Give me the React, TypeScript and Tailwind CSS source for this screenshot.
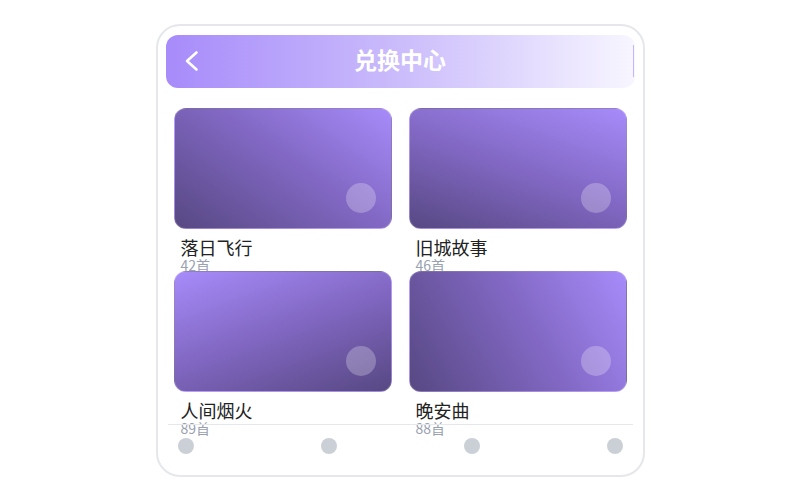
import React from 'react';

type Album = {
  title: string;
  count: number;
  gradient: string;
};

const albums: Album[] = [
  { title: '落日飞行', count: 42, gradient: 'bg-[linear-gradient(215deg,#a78bfa_0%,#8268c4_45%,#574883_100%)]' },
  { title: '旧城故事', count: 46, gradient: 'bg-[linear-gradient(200deg,#a78bfa_0%,#8268c4_50%,#574883_100%)]' },
  { title: '人间烟火', count: 89, gradient: 'bg-[linear-gradient(160deg,#a78bfa_0%,#8066c0_50%,#574883_100%)]' },
  { title: '晚安曲', count: 88, gradient: 'bg-[linear-gradient(240deg,#a78bfa_0%,#8268c4_45%,#574883_100%)]' },
];

const font = { fontFamily: '"Noto Sans CJK SC", "Noto Sans", sans-serif' };

const AlbumCard: React.FC<{ album: Album }> = ({ album }) => (
  <div className="h-[163px]">
    <div className={`relative h-[121px] rounded-[12px] border border-white/20 ${album.gradient}`}>
      <div className="absolute right-[15px] bottom-[15px] w-[30px] h-[30px] rounded-full bg-white/25" />
    </div>
    <div className="mt-2 pl-[7px] text-[18px] leading-[21px] text-[#222]">{album.title}</div>
    <div className="pl-[7px] text-[14px] leading-[14px] text-gray-400">{album.count}首</div>
  </div>
);

export default function App() {
  return (
    <div className="w-[800px] h-[500px] flex items-center justify-center bg-white" style={font}>
      <div className="w-[489px] h-[453px] border-2 border-gray-200 rounded-[24px] bg-white flex flex-col pt-[9px] px-2">
        {/* header */}
        <div className="relative h-[53px] rounded-[12px] bg-gradient-to-r from-[#a78bfa] via-[#cbbcfb] to-[#f8f6ff] flex items-center justify-center pb-[4px]">
          <svg className="absolute left-[18px] top-[15px]" width="16" height="22" viewBox="0 0 16 22" fill="none">
            <polyline points="12.5,2.5 3,11 12.5,19.5" stroke="white" strokeWidth="2.6" strokeLinecap="round" strokeLinejoin="round" />
          </svg>
          <span className="text-white font-bold text-[23px] leading-none">兑换中心</span>
          <div className="absolute right-[1px] top-[10px] bottom-[11px] w-px bg-[#c4b5fd]" />
        </div>

        {/* list */}
        <div className="h-[336px] pt-5 px-[8px]">
          <div className="grid grid-cols-2 gap-x-[17px]">
            {albums.map((a) => (
              <AlbumCard key={a.title} album={a} />
            ))}
          </div>
        </div>

        {/* bottom nav */}
        <div className="mx-[2px] border-t border-gray-200 pt-[13px] px-[10px] flex justify-between">
          {[0, 1, 2, 3].map((i) => (
            <div key={i} className="w-4 h-4 rounded-full bg-[#cbd0d6]" />
          ))}
        </div>
      </div>
    </div>
  );
}
